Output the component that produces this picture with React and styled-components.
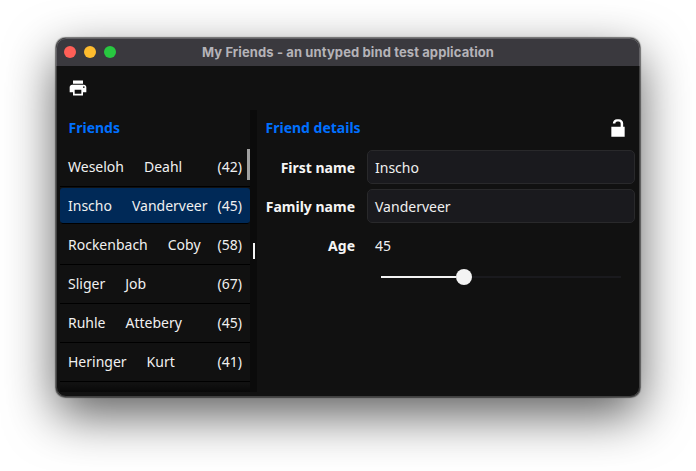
import React from "react";
import styled, { createGlobalStyle } from "styled-components";

const GlobalStyle = createGlobalStyle`
  * { box-sizing: border-box; }
  body { margin: 0; background: #fff; overflow: hidden; }
`;

const Desktop = styled.main`
  width: 696px;
  height: 471px;
  padding: 38px 56px 0;
  background: #fff;
`;

const Window = styled.section`
  display: flex;
  flex-direction: column;
  width: 584px;
  height: 359px;
  border-radius: 10px;
  overflow: hidden;
  background: #111;
  color: #f0f0f0;
  font: 14px/19px "Noto Sans", sans-serif;
  box-shadow: 0 0 1px 0.5px rgba(0, 0, 0, 0.5), 0 18px 50px rgba(0, 0, 0, 0.64);
  position: relative;

  &::after {
    content: "";
    position: absolute;
    inset: 0;
    border: 1px solid rgba(255, 255, 255, 0.2);
    border-radius: inherit;
    pointer-events: none;
  }
`;

const TitleBar = styled.header`
  display: grid;
  grid-template-columns: 80px 1fr 80px;
  align-items: center;
  flex: 0 0 28px;
  background: #3a393e;
`;

const Lights = styled.div`
  display: flex;
  gap: 8px;
  padding-left: 8px;
`;

const Light = styled.span`
  width: 12px;
  height: 12px;
  border-radius: 50%;
  background: ${(p) => p.$color};
`;

const Title = styled.h1`
  margin: 0;
  text-align: center;
  white-space: nowrap;
  font: 700 13px/16px Inter, sans-serif;
  letter-spacing: 0.11px;
  color: #b5b3b8;
`;

const Toolbar = styled.div`
  display: flex;
  align-items: center;
  flex: 0 0 44px;
  padding-left: 12px;
`;

const Icon = styled.svg`
  display: block;
  width: 20px;
  height: 20px;
  fill: #fff;
`;

const Split = styled.div`
  display: grid;
  grid-template-columns: 190px 7px 1fr;
  flex: 0 0 282px;
  padding-left: 4px;
`;

const Sidebar = styled.section`
  display: flex;
  flex-direction: column;
  min-width: 0;
  min-height: 0;
`;

const Heading = styled.h2`
  margin: 0;
  padding-left: 8.5px;
  font: 700 14px/36px "Noto Sans", sans-serif;
  color: #0070ff;
`;

const FriendList = styled.ul`
  position: relative;
  flex: 1;
  margin: 2px 0 0;
  padding: 0;
  list-style: none;
  overflow: hidden;

  &::after {
    content: "";
    position: absolute;
    inset: auto 0 0;
    height: 8px;
    background: linear-gradient(transparent, #080808);
  }
`;

const Friend = styled.li`
  display: flex;
  align-items: center;
  height: 39px;
  padding: 0 8px 2px;
  border-bottom: 1px solid #000;
`;

const SelectedFriend = styled(Friend)`
  padding-bottom: 0;
  height: 35px;
  margin: 1px 0 3px;
  border: 0;
  border-radius: 3px;
  background: #002957;
  box-shadow: 0 2px 0 -1px #000;
`;

const FamilyName = styled.span`
  margin-left: 20px;
`;

const AgeTag = styled.span`
  margin-left: auto;
`;

const ScrollThumb = styled.div`
  position: absolute;
  top: 1px;
  right: 0;
  width: 3px;
  height: 31px;
  background: #a0a0a0;
`;

const Divider = styled.div`
  display: flex;
  align-items: center;
  justify-content: center;
  background: #0b0b0b;
`;

const Grip = styled.span`
  width: 2px;
  height: 16px;
  background: #f3f3f3;
`;

const Details = styled.section`
  padding: 0 5px 0 0;
`;

const DetailsHeader = styled.div`
  display: flex;
  justify-content: space-between;
  align-items: center;
  height: 36px;
  padding: 0 7px 0 0;
`;

const Form = styled.div`
  display: grid;
  grid-template-columns: 98px 268px;
  grid-template-rows: 34px 34px 34px 20px;
  column-gap: 12px;
  row-gap: 5px;
  margin-top: 4px;
  align-items: center;
`;

const Label = styled.label`
  text-align: right;
  font-weight: 700;
  white-space: nowrap;
  color: #f5f5f5;
`;

const Field = styled.div`
  height: 34px;
  padding: 0 7px;
  border: 1px solid #29292b;
  border-radius: 5px;
  background: #1a1a1e;
  line-height: 34px;
`;

const Value = styled.span`
  padding-left: 8px;
`;

const Slider = styled.div`
  grid-column: 2;
  display: flex;
  align-items: center;
  margin: 0 14px;
  height: 16px;
`;

const Track = styled.span`
  width: ${(p) => p.$width}px;
  height: 2px;
  background: ${(p) => (p.$filled ? "#f3f3f3" : "#1a1a1e")};
`;

const Thumb = styled.span`
  width: 16px;
  height: 16px;
  border-radius: 50%;
  background: #f3f3f3;
`;

const FRIENDS = [
  ["Weseloh", "Deahl", 42],
  ["Inscho", "Vanderveer", 45],
  ["Rockenbach", "Coby", 58],
  ["Sliger", "Job", 67],
  ["Ruhle", "Attebery", 45],
  ["Heringer", "Kurt", 41],
];

function FriendRow({ first, family, age, selected }) {
  const Row = selected ? SelectedFriend : Friend;
  return (
    <Row>
      <span>{first}</span>
      <FamilyName>{family}</FamilyName>
      <AgeTag>({age})</AgeTag>
    </Row>
  );
}

export default function App() {
  return (
    <>
      <GlobalStyle />
      <Desktop>
        <Window>
          <TitleBar>
            <Lights>
              <Light $color="#ff5f57" />
              <Light $color="#febc2e" />
              <Light $color="#28c840" />
            </Lights>
            <Title>My Friends - an untyped bind test application</Title>
          </TitleBar>
          <Toolbar>
            <Icon viewBox="0 0 24 24">
              <path d="M19 8H5c-1.66 0-3 1.34-3 3v6h4v4h12v-4h4v-6c0-1.66-1.34-3-3-3zm-3 11H8v-5h8v5zm3-7c-.55 0-1-.45-1-1s.45-1 1-1 1 .45 1 1-.45 1-1 1zm-1-9H6v4h12V3z" />
            </Icon>
          </Toolbar>
          <Split>
            <Sidebar>
              <Heading>Friends</Heading>
              <FriendList>
                {FRIENDS.map(([first, family, age], i) => (
                  <FriendRow key={first} first={first} family={family} age={age} selected={i === 1} />
                ))}
                <ScrollThumb />
              </FriendList>
            </Sidebar>
            <Divider>
              <Grip />
            </Divider>
            <Details>
              <DetailsHeader>
                <Heading>Friend details</Heading>
                <Icon viewBox="0 0 24 24">
                  <path d="M20 10.4V22.4H4V10.4h11.2V6.6a2.4 2.4 0 0 0-2.4-2.4h-1.6a2.4 2.4 0 0 0-2.4 2.4H5.8a5 5 0 0 1 5-5.2h2.4a5 5 0 0 1 5 5v4z" />
                </Icon>
              </DetailsHeader>
              <Form>
                <Label>First name</Label>
                <Field>Inscho</Field>
                <Label>Family name</Label>
                <Field>Vanderveer</Field>
                <Label>Age</Label>
                <Value>45</Value>
                <Slider>
                  <Track $filled $width={75} />
                  <Thumb />
                  <Track $width={149} />
                </Slider>
              </Form>
            </Details>
          </Split>
        </Window>
      </Desktop>
    </>
  );
}
